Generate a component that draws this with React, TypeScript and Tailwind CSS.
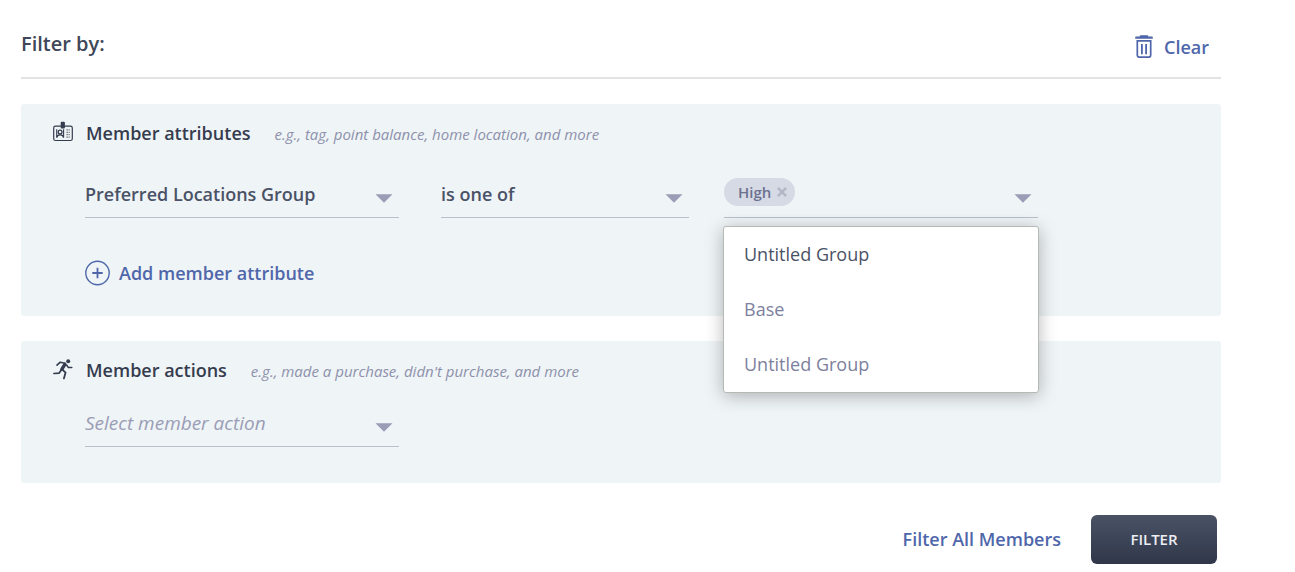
import { useState } from 'react';
import type { ReactNode } from 'react';

const ATTRIBUTES = ['Preferred Locations Group', 'Tag', 'Point balance', 'Home location'];
const OPERATORS = ['is one of', 'is not one of'];
const ACTIONS = ['Made a purchase', "Didn't purchase"];
const GROUPS = ['Untitled Group', 'Base', 'Untitled Group'];

const TrashIcon = () => (
  <svg width="18" height="23" viewBox="0 0 18 23" fill="none" stroke="currentColor" className="mb-0.5" aria-hidden="true">
    <path d="M5.2 0.3h7.6l0.7 1.3H17a0.8 0.8 0 0 1 0.8 0.8v1.4H0.2V2.4A0.8 0.8 0 0 1 1 1.6h3.5z" fill="currentColor" stroke="none" />
    <path d="M2.3 5.8h13.4v14.4a2 2 0 0 1-2 2H4.3a2 2 0 0 1-2-2z" strokeWidth="1.7" />
    <path d="M6.9 9v10.2M11.1 9v10.2" strokeWidth="1.8" />
  </svg>
);

const BadgeIcon = () => (
  <svg width="20" height="21" viewBox="0 0 20 21" fill="none" stroke="currentColor" className="mb-0.5" aria-hidden="true">
    <rect x="0.7" y="5.1" width="18.6" height="14.4" rx="1.8" strokeWidth="1.2" />
    <rect x="7.7" y="0.8" width="4.2" height="6.8" rx="1" fill="currentColor" stroke="none" />
    <path d="M3.7 16.6V8.2M10.6 16.6V8.2" strokeWidth="1.1" />
    <path d="M4 16.6c0-2 1.2-2.8 3.1-2.8s3.3 0.8 3.3 2.8" strokeWidth="1.3" />
    <circle cx="7.1" cy="11" r="1.9" strokeWidth="1.3" />
    <path d="M13.4 8.9h3.4M13.4 11.3h3.4M13.4 13.7h3.4M13.4 16.1h3.4" strokeWidth="1" strokeDasharray="2 0.5" opacity="0.8" />
  </svg>
);

const RunnerIcon = () => (
  <svg width="20" height="21" viewBox="0 0 20 21" fill="none" stroke="currentColor" strokeLinejoin="round" strokeLinecap="round" aria-hidden="true">
    <circle cx="15.2" cy="2.3" r="2" fill="currentColor" stroke="none" />
    <path d="M12 4.3L7.2 3.2L4 6.2" strokeWidth="1.6" />
    <path d="M11.9 5.4L8.9 10.2" strokeWidth="3.4" />
    <path d="M13.6 6L15.4 8.6L18.8 8.6" strokeWidth="1.5" />
    <path d="M8.4 10.8L6 14.2L0.9 14.5" strokeWidth="1.7" />
    <path d="M9.4 10.6L12.6 13.6L10.9 19.4" strokeWidth="1.8" />
  </svg>
);

const PlusIcon = () => (
  <svg width="26" height="26" viewBox="0 0 26 26" fill="none" stroke="currentColor" aria-hidden="true">
    <circle cx="12.5" cy="13" r="11.7" strokeWidth="1.4" />
    <path d="M12.5 7.8v10.4M7.3 13h10.4" strokeWidth="1.8" />
  </svg>
);

const Arrow = () => (
  <svg
    width="18"
    height="9"
    viewBox="0 0 18 9"
    fill="#9a9db5"
    className="pointer-events-none absolute right-1.5 bottom-[15px]"
    aria-hidden="true"
  >
    <path d="M0.5 0.3h17L9 8.8z" />
  </svg>
);

type SelectProps = { label: string; options: string[]; placeholder?: string };

const Select = ({ label, options, placeholder }: SelectProps) => {
  const [value, setValue] = useState(placeholder ? '' : options[0]);
  return (
    <div className="relative">
      <select
        aria-label={label}
        value={value}
        onChange={(e) => setValue(e.target.value)}
        className={`block h-[46px] w-full appearance-none border-b border-[#b9bfcc] bg-transparent pr-8 outline-none ${
          value ? 'text-[18px] font-semibold text-[#4a5266]' : 'text-[19px] text-[#9a9db5] italic'
        }`}
      >
        {placeholder && <option value="">{placeholder}</option>}
        {options.map((o) => (
          <option key={o}>{o}</option>
        ))}
      </select>
      <Arrow />
    </div>
  );
};

const GroupSelect = () => {
  const [tags, setTags] = useState(['High']);
  const [open, setOpen] = useState(true);
  return (
    <div className="relative">
      <div className="flex h-[46px] items-start border-b border-[#b9bfcc] pt-1.5">
        {tags.map((t) => (
          <span key={t} className="flex h-7 items-center gap-1.5 rounded-full bg-[#d5dae5] pr-2 pl-3.5 text-[15px] font-semibold text-[#6d7190]">
            {t}
            <button type="button" aria-label={`Remove ${t}`} onClick={() => setTags(tags.filter((x) => x !== t))}>
              <svg width="10" height="10" viewBox="0 0 10 10" stroke="#b3b7c6" strokeWidth="2.6" aria-hidden="true">
                <path d="M0.9 0.9l8.2 8.2M9.1 0.9l-8.2 8.2" />
              </svg>
            </button>
          </span>
        ))}
        <button type="button" aria-label="Toggle groups" aria-expanded={open} onClick={() => setOpen(!open)} className="h-full flex-1" />
      </div>
      <Arrow />
      {open && (
        <ul
          role="listbox"
          aria-label="Groups"
          className="absolute -inset-x-px top-full z-10 mt-2 rounded-[3px] border border-[#b6bab4] bg-white text-[18px] text-[#7d819d] shadow-[0_3px_18px_rgba(0,0,0,0.28)]"
        >
          {GROUPS.map((g, i) => (
            <li key={i} role="option" aria-selected={i === 0} className="flex h-[55px] items-center px-5 aria-selected:text-[#4a5266]">
              {g}
            </li>
          ))}
        </ul>
      )}
    </div>
  );
};

type PanelProps = { icon: ReactNode; title: string; hint: string; children: ReactNode };

const Panel = ({ icon, title, hint, children }: PanelProps) => (
  <section className="rounded-[3px] bg-[#eff4f7] px-8 pt-4">
    <div className="flex h-6 items-center text-[#353c4e]">
      {icon}
      <h3 className="ml-[13px] pt-0.5 text-[18px] font-semibold">{title}</h3>
      <p className="ml-6 pt-1 text-[15px] text-[#8d91ab] italic">{hint}</p>
    </div>
    <div className="pl-8">{children}</div>
  </section>
);

export default function App() {
  return (
    <main className="mr-[74px] ml-[21px] bg-white pt-5 font-['Open_Sans',sans-serif]">
      <header className="flex h-[59px] items-start justify-between border-b-2 border-[#e2e3e5] pr-3">
        <h2 className="pt-2 text-[20px] leading-8 font-semibold text-[#404759]">Filter by:</h2>
        <button type="button" className="flex items-center gap-[11px] pt-[11px] text-[18px] leading-8 font-semibold text-[#4f67aa]">
          <TrashIcon />
          Clear
        </button>
      </header>

      <div className="mt-[25px] space-y-[25px]">
        <Panel icon={<BadgeIcon />} title="Member attributes" hint="e.g., tag, point balance, home location, and more">
          <div className="flex pt-7">
            <div className="mr-[42px] w-[314px]">
              <Select label="Member attribute" options={ATTRIBUTES} />
            </div>
            <div className="mr-[35px] w-[248px]">
              <Select label="Condition" options={OPERATORS} />
            </div>
            <div className="w-[314px]">
              <GroupSelect />
            </div>
          </div>
          <div className="pt-[42px] pb-[30px]">
            <button type="button" className="flex h-[26px] items-center gap-2 text-[18px] font-semibold text-[#4f67aa]">
              <PlusIcon />
              Add member attribute
            </button>
          </div>
        </Panel>

        <Panel icon={<RunnerIcon />} title="Member actions" hint="e.g., made a purchase, didn't purchase, and more">
          <div className="max-w-[314px] pt-5 pb-9">
            <Select label="Member action" options={ACTIONS} placeholder="Select member action" />
          </div>
        </Panel>
      </div>

      <footer className="mt-8 flex items-center justify-end gap-[30px] pr-1">
        <a href="#all" className="text-[18px] font-semibold text-[#4f67aa]">
          Filter All Members
        </a>
        <button type="button" className="h-[49px] w-[126px] rounded-md bg-linear-to-b from-[#4a5266] to-[#2f3749] text-[15px] font-semibold text-[#eceef2]">
          FILTER
        </button>
      </footer>
    </main>
  );
}
